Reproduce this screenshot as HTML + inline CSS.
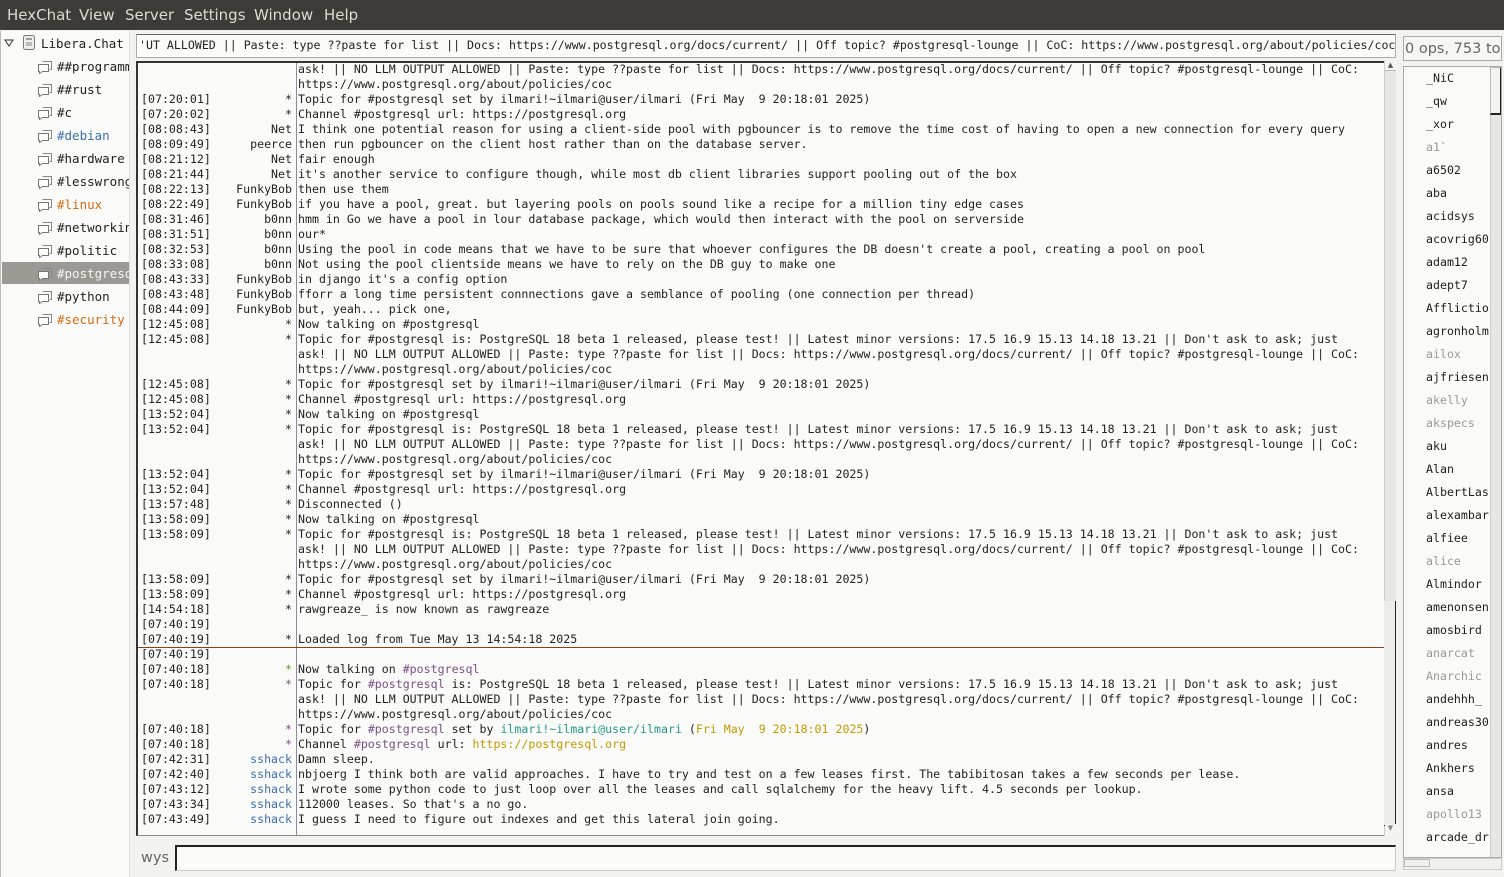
<!DOCTYPE html>
<html><head><meta charset="utf-8">
<style>
*{margin:0;padding:0;box-sizing:border-box}
body{width:1504px;height:877px;background:#f2f2f1;position:relative;overflow:hidden;font-family:"DejaVu Sans","Liberation Sans",sans-serif}
.menu{position:absolute;left:0;top:0;width:1504px;height:30px;background:#3c3b37;color:#dfdbd2;font-size:15px;line-height:31px}
.menu span{position:absolute;top:0}
.tree{position:absolute;left:0;top:31px;width:130px;height:846px;background:#fafaf9;border-left:1px solid #bbb;border-right:1px solid #ddd;font-size:12.5px;font-family:"DejaVu Sans Mono",monospace}
.ti{position:absolute;height:22px;line-height:22px;white-space:nowrap;overflow:hidden}
.ic{position:absolute;left:36px;width:16px;height:14px}
.mono{font-family:"DejaVu Sans Mono","Liberation Mono",monospace;font-size:11.6px}
.topic{position:absolute;left:136px;top:34px;width:1260px;height:24px;background:#fbfbfa;border:1px solid #aaa;border-top:1px solid #666;line-height:21px;padding-left:2px;white-space:pre;overflow:hidden;color:#222}
.chat{position:absolute;left:136px;top:61px;width:1260px;height:775px;background:#fafaf9;border:1px solid #888;border-top:2px solid #333;border-left:2px solid #333;overflow:hidden}
.sep{position:absolute;left:158px;top:0;width:1px;height:775px;background:#8a8aa0}
.r{position:absolute;left:0;height:15px;line-height:15px;white-space:pre;color:#222;width:1248px}
.r .t{position:absolute;left:3px}
.r .n{position:absolute;right:1092px;text-align:right}
.r .m{position:absolute;left:160px}
.p{color:#7a4f85}.u{color:#22998a}.y{color:#c49a00}.b{color:#3d6fb0}.g{color:#5aa02c}
.sb{position:absolute;left:1384px;top:61px;width:12px;height:775px;background:#e6e6e4;border-left:1px solid #ccc}
.inp{position:absolute;left:175px;top:845px;width:1221px;height:26px;background:#fbfbfa;border:1px solid #ccc;border-top:2px solid #222;border-left:2px solid #222}
.uh{position:absolute;left:1403px;top:36px;width:99px;height:25px;border:1px solid #aaa;background:#f6f6f5;color:#666;font-size:14.5px;line-height:24px;white-space:nowrap;overflow:hidden;padding-left:1px}
.ul{position:absolute;left:1403px;top:66px;width:99px;height:792px;background:#fafaf9;border:1px solid #aaa;overflow:hidden}
.ul div{position:absolute;left:22px;font-family:"DejaVu Sans Mono",monospace;font-size:11.6px;color:#1d1d1d;white-space:nowrap}
.ul .gr{color:#999}
</style></head><body>
<div class="menu"><span style="left:7px">HexChat</span><span style="left:79px">View</span><span style="left:125px">Server</span><span style="left:184px">Settings</span><span style="left:254px">Window</span><span style="left:324px">Help</span></div>

<div class="tree">
<svg style="position:absolute;left:3px;top:8px" width="10" height="8"><path d="M1 1 L9 1 L5 7 Z" fill="none" stroke="#333"/></svg>
<svg style="position:absolute;left:21px;top:3px" width="14" height="17"><rect x="1.5" y="1.5" width="11" height="14" rx="2" fill="#eee" stroke="#777"/><rect x="4" y="4" width="6" height="2" fill="#999"/><rect x="4" y="8" width="6" height="4" fill="#bbb"/></svg>
<div class="ti" style="left:40px;top:2px;color:#222;font-family:'DejaVu Sans Mono',monospace">Libera.Chat</div>
<div style="position:absolute;left:1px;top:231px;width:127px;height:22px;background:#9a9994"></div>
<div id="tl"></div>
</div>

<div class="topic mono">'UT ALLOWED || Paste: type ??paste for list || Docs: https://www.postgresql.org/docs/current/ || Off topic? #postgresql-lounge || CoC: https://www.postgresql.org/about/policies/coc</div>

<div class="chat mono" id="chat"><div class="sep"></div>
<div style="position:absolute;left:0;top:584px;width:1246px;height:1px;background:#8f3f10"></div>
</div>
<div class="sb"><div style="position:absolute;left:0;top:0;width:11px;height:10px;border-bottom:1px solid #bbb;font-size:7px;text-align:center;color:#555;background:#f4f4f3">▲</div><div style="position:absolute;left:-1px;top:540px;width:12px;height:225px;border-right:1px solid #222;border-bottom:1px solid #222;background:#ececea"></div><div style="position:absolute;left:0;bottom:0;width:11px;height:12px;font-size:7px;text-align:center;color:#888;background:#f4f4f3">▼</div></div>

<div style="position:absolute;left:141px;top:850px;color:#666;font-size:14.5px">wys</div>
<div class="inp"></div>

<div class="uh">0 ops, 753 total</div>
<div class="ul" id="ul"><div style="left:86px;top:0;width:12px;height:792px;background:#e6e6e4;border-left:1px solid #ccc"></div><div style="left:86px;top:0;width:12px;height:48px;background:#f3f3f2;border:1px solid #bbb;border-bottom:2px solid #222;border-right:2px solid #222"></div></div>

<script>
var tl=[["##programm","#222"],["##rust","#222"],["#c","#222"],["#debian","#3d6fb0"],["#hardware","#222"],["#lesswrong","#222"],["#linux","#d36a10"],["#networking","#222"],["#politic","#222"],["#postgresql","#f5f5f5"],["#python","#222"],["#security","#d36a10"]];
var h="";
tl.forEach(function(t,i){var y=25+i*23;
h+='<svg class="ic" style="top:'+(y+4)+'px" width="16" height="14"><path d="M5.5 1.5h9v8h-2" fill="none" stroke="#888"/><path d="M1.5 4.5h10v7h-6l-3 2v-2h-1z" fill="#fff" stroke="#777"/></svg>';
h+='<div class="ti" style="left:56px;top:'+y+'px;width:72px;color:'+t[1]+'">'+t[0]+'</div>';});
document.getElementById('tl').outerHTML=h;

var T1="Topic for #postgresql is: PostgreSQL 18 beta 1 released, please test! || Latest minor versions: 17.5 16.9 15.13 14.18 13.21 || Don't ask to ask; just";
var T2="ask! || NO LLM OUTPUT ALLOWED || Paste: type ??paste for list || Docs: https://www.postgresql.org/docs/current/ || Off topic? #postgresql-lounge || CoC:";
var T3="https://www.postgresql.org/about/policies/coc";
var TS="Topic for #postgresql set by ilmari!~ilmari@user/ilmari (Fri May  9 20:18:01 2025)";
var CU="Channel #postgresql url: https://postgresql.org";
var L=[["","",T2],["","",T3],["07:20:01","*",TS],["07:20:02","*",CU],
["08:08:43","Net","I think one potential reason for using a client-side pool with pgbouncer is to remove the time cost of having to open a new connection for every query"],
["08:09:49","peerce","then run pgbouncer on the client host rather than on the database server."],
["08:21:12","Net","fair enough"],
["08:21:44","Net","it's another service to configure though, while most db client libraries support pooling out of the box"],
["08:22:13","FunkyBob","then use them"],
["08:22:49","FunkyBob","if you have a pool, great. but layering pools on pools sound like a recipe for a million tiny edge cases"],
["08:31:46","b0nn","hmm in Go we have a pool in lour database package, which would then interact with the pool on serverside"],
["08:31:51","b0nn","our*"],
["08:32:53","b0nn","Using the pool in code means that we have to be sure that whoever configures the DB doesn't create a pool, creating a pool on pool"],
["08:33:08","b0nn","Not using the pool clientside means we have to rely on the DB guy to make one"],
["08:43:33","FunkyBob","in django it's a config option"],
["08:43:48","FunkyBob","fforr a long time persistent connnections gave a semblance of pooling (one connection per thread)"],
["08:44:09","FunkyBob","but, yeah... pick one,"],
["12:45:08","*","Now talking on #postgresql"],["12:45:08","*",T1],["","",T2],["","",T3],["12:45:08","*",TS],["12:45:08","*",CU],
["13:52:04","*","Now talking on #postgresql"],["13:52:04","*",T1],["","",T2],["","",T3],["13:52:04","*",TS],["13:52:04","*",CU],
["13:57:48","*","Disconnected ()"],
["13:58:09","*","Now talking on #postgresql"],["13:58:09","*",T1],["","",T2],["","",T3],["13:58:09","*",TS],["13:58:09","*",CU],
["14:54:18","*","rawgreaze_ is now known as rawgreaze"],
["07:40:19","",""],["07:40:19","*","Loaded log from Tue May 13 14:54:18 2025"],
["07:40:19","",""],
["07:40:18","<span class=g>*</span>",'Now talking on <span class=p>#postgresql</span>'],
["07:40:18","<span class=p>*</span>",T1.replace("#postgresql","<span class=p>#postgresql</span>")],["","",T2],["","",T3],
["07:40:18","<span class=p>*</span>",'Topic for <span class=p>#postgresql</span> set by <span class=u>ilmari!~ilmari@user/ilmari</span> (<span class=y>Fri May  9 20:18:01 2025</span>)'],
["07:40:18","<span class=p>*</span>",'Channel <span class=p>#postgresql</span> url: <span class=y>https://postgresql.org</span>'],
["07:42:31","<span class=b>sshack</span>","Damn sleep."],
["07:42:40","<span class=b>sshack</span>","nbjoerg I think both are valid approaches. I have to try and test on a few leases first. The tabibitosan takes a few seconds per lease."],
["07:43:12","<span class=b>sshack</span>","I wrote some python code to just loop over all the leases and call sqlalchemy for the heavy lift. 4.5 seconds per lookup."],
["07:43:34","<span class=b>sshack</span>","112000 leases. So that's a no go."],
["07:43:49","<span class=b>sshack</span>","I guess I need to figure out indexes and get this lateral join going."]];
h="";
L.forEach(function(l,i){var y=-1+i*15;
h+='<div class="r" style="top:'+y+'px">'+(l[0]?'<span class=t>['+l[0]+']</span>':'')+'<span class=n style="left:0;width:154px">'+l[1]+'</span><span class=m>'+l[2]+'</span></div>';});
document.getElementById('chat').insertAdjacentHTML('beforeend',h);

var U=[["_NiC"],["_qw"],["_xor"],["a1`",1],["a6502"],["aba"],["acidsys"],["acovrig60"],["adam12"],["adept7"],["Afflictio"],["agronholm"],["ailox",1],["ajfriesen"],["akelly",1],["akspecs",1],["aku"],["Alan"],["AlbertLas"],["alexambar"],["alfiee"],["alice",1],["Almindor"],["amenonsen"],["amosbird"],["anarcat",1],["Anarchic",1],["andehhh_"],["andreas30"],["andres"],["Ankhers"],["ansa"],["apollo13",1],["arcade_dr"]];
h="";
U.forEach(function(u,i){h+='<div'+(u[1]?' class=gr':'')+' style="top:'+(4+i*23)+'px">'+u[0]+'</div>';});
document.getElementById('ul').insertAdjacentHTML('beforeend',h);
</script>
<div style="position:absolute;left:1403px;top:858px;width:99px;height:12px;border:1px solid #ccc;background:#f0f0ef"><div style="width:26px;height:8px;border:1px solid #bbb"></div></div>
</body></html>
